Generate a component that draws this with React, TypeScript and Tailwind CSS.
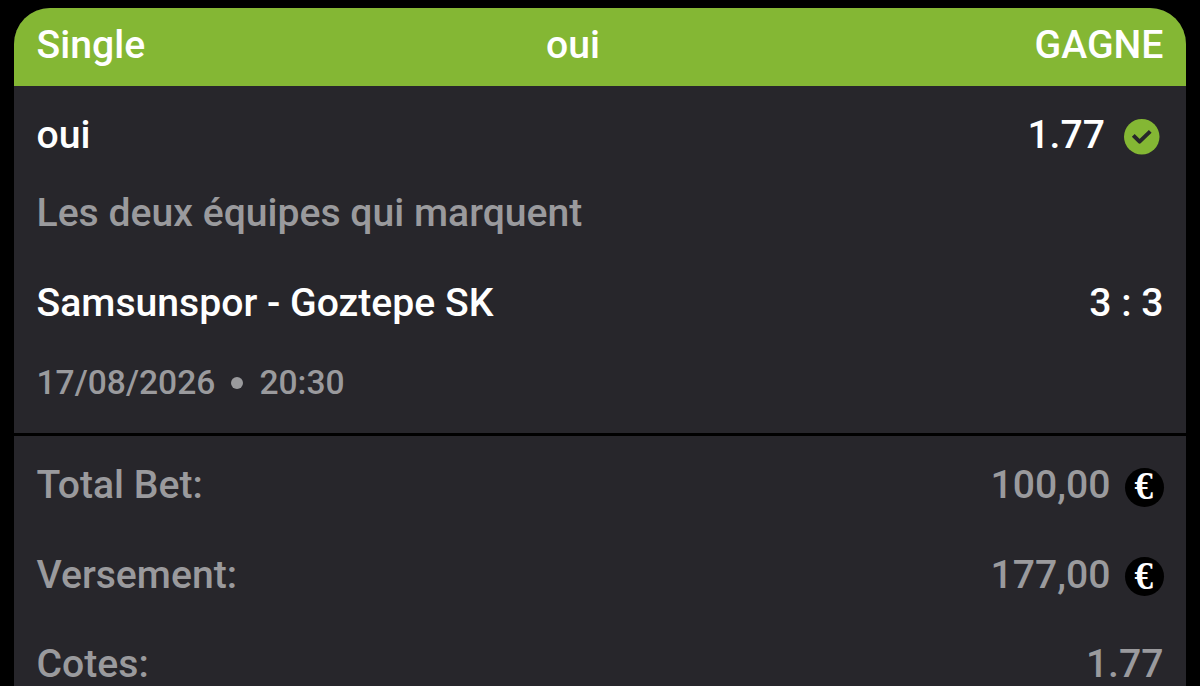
import React from "react";

const totals = [
  { label: "Total Bet:", value: "100,00", coin: true },
  { label: "Versement:", value: "177,00", coin: true },
  { label: "Cotes:", value: "1.77", coin: false },
];

function EuroCoin() {
  return (
    <span className="ml-[14px] mt-1 flex h-[39px] w-[39px] items-center justify-center rounded-full bg-black font-['Liberation_Serif',serif] text-[39px] font-bold leading-none text-white">
      <span className="-ml-px -mt-[3px] scale-x-95">€</span>
    </span>
  );
}

function CheckBadge() {
  return (
    <svg
      viewBox="0 0 36 36"
      className="ml-[19px] mr-[4px] mt-[4.5px] h-[35.5px] w-[35.5px]"
    >
      <circle cx="18" cy="18" r="18" fill="#84b734" />
      <path
        d="M9.4 16.6l6.4 6.4 10.8-10.4"
        fill="none"
        stroke="#27262b"
        strokeWidth="4"
        strokeLinejoin="round"
      />
    </svg>
  );
}

function App() {
  return (
    <div className="h-[686px] w-full overflow-hidden bg-black px-[14px] pt-[7.5px] font-[Roboto,sans-serif] text-[39.15px] font-medium leading-[46px] text-white">
      <div className="h-[700px] overflow-hidden rounded-t-[36px] bg-[#27262b]">
        <div className="grid h-[78.5px] grid-cols-3 bg-[#84b734] px-[22.5px] pt-[14px]">
          <span>Single</span>
          <span className="-ml-[54px] text-center">oui</span>
          <span className="text-right">GAGNE</span>
        </div>

        <div className="h-[347px] px-[22.5px] pt-[25.5px]">
          <div className="flex h-[78px] justify-between">
            <span>oui</span>
            <div className="flex h-[46px] items-center">
              <span>1.77</span>
              <CheckBadge />
            </div>
          </div>
          <p className="h-[90px] text-[#9a9a9d]">Les deux équipes qui marquent</p>
          <div className="flex h-[80px] justify-between">
            <span>Samsunspor - Goztepe SK</span>
            <span>3 : 3</span>
          </div>
          <div className="flex items-center text-[33.6px] text-[#9a9a9d]">
            <span>17/08/2026</span>
            <span className="mx-4 h-3 w-3 rounded-full bg-[#9a9a9d]" />
            <span>20:30</span>
          </div>
        </div>

        <div className="border-t-[3px] border-black px-[22.5px] pt-[26px] text-[#9a9a9d]">
          {totals.map((row) => (
            <div key={row.label} className="flex h-[89.7px] justify-between">
              <span>{row.label}</span>
              <div className="flex h-[46px] items-center">
                <span>{row.value}</span>
                {row.coin && <EuroCoin />}
              </div>
            </div>
          ))}
        </div>
      </div>
    </div>
  );
}

export default App;
